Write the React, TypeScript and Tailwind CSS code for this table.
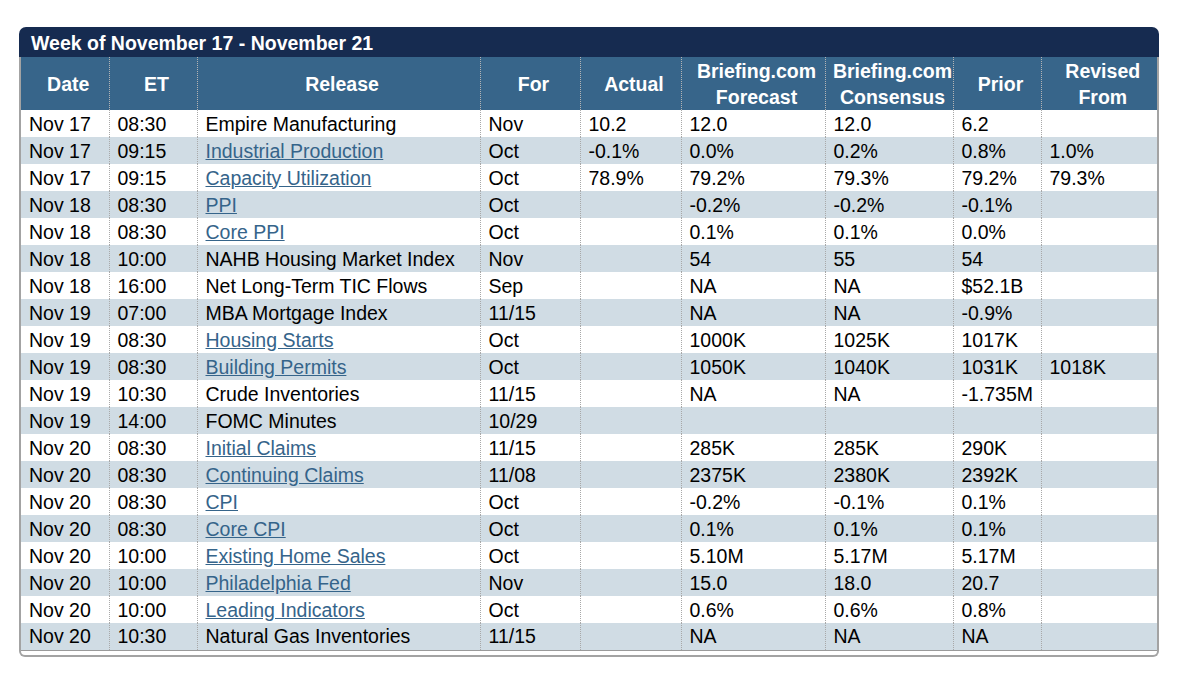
import React from 'react'

type Row = {
  date: string
  et: string
  release: string
  link?: boolean
  forPeriod: string
  actual?: string
  forecast?: string
  consensus?: string
  prior?: string
  revised?: string
}

const rows: Row[] = [
  { date: 'Nov 17', et: '08:30', release: 'Empire Manufacturing', forPeriod: 'Nov', actual: '10.2', forecast: '12.0', consensus: '12.0', prior: '6.2' },
  { date: 'Nov 17', et: '09:15', release: 'Industrial Production', link: true, forPeriod: 'Oct', actual: '-0.1%', forecast: '0.0%', consensus: '0.2%', prior: '0.8%', revised: '1.0%' },
  { date: 'Nov 17', et: '09:15', release: 'Capacity Utilization', link: true, forPeriod: 'Oct', actual: '78.9%', forecast: '79.2%', consensus: '79.3%', prior: '79.2%', revised: '79.3%' },
  { date: 'Nov 18', et: '08:30', release: 'PPI', link: true, forPeriod: 'Oct', forecast: '-0.2%', consensus: '-0.2%', prior: '-0.1%' },
  { date: 'Nov 18', et: '08:30', release: 'Core PPI', link: true, forPeriod: 'Oct', forecast: '0.1%', consensus: '0.1%', prior: '0.0%' },
  { date: 'Nov 18', et: '10:00', release: 'NAHB Housing Market Index', forPeriod: 'Nov', forecast: '54', consensus: '55', prior: '54' },
  { date: 'Nov 18', et: '16:00', release: 'Net Long-Term TIC Flows', forPeriod: 'Sep', forecast: 'NA', consensus: 'NA', prior: '$52.1B' },
  { date: 'Nov 19', et: '07:00', release: 'MBA Mortgage Index', forPeriod: '11/15', forecast: 'NA', consensus: 'NA', prior: '-0.9%' },
  { date: 'Nov 19', et: '08:30', release: 'Housing Starts', link: true, forPeriod: 'Oct', forecast: '1000K', consensus: '1025K', prior: '1017K' },
  { date: 'Nov 19', et: '08:30', release: 'Building Permits', link: true, forPeriod: 'Oct', forecast: '1050K', consensus: '1040K', prior: '1031K', revised: '1018K' },
  { date: 'Nov 19', et: '10:30', release: 'Crude Inventories', forPeriod: '11/15', forecast: 'NA', consensus: 'NA', prior: '-1.735M' },
  { date: 'Nov 19', et: '14:00', release: 'FOMC Minutes', forPeriod: '10/29' },
  { date: 'Nov 20', et: '08:30', release: 'Initial Claims', link: true, forPeriod: '11/15', forecast: '285K', consensus: '285K', prior: '290K' },
  { date: 'Nov 20', et: '08:30', release: 'Continuing Claims', link: true, forPeriod: '11/08', forecast: '2375K', consensus: '2380K', prior: '2392K' },
  { date: 'Nov 20', et: '08:30', release: 'CPI', link: true, forPeriod: 'Oct', forecast: '-0.2%', consensus: '-0.1%', prior: '0.1%' },
  { date: 'Nov 20', et: '08:30', release: 'Core CPI', link: true, forPeriod: 'Oct', forecast: '0.1%', consensus: '0.1%', prior: '0.1%' },
  { date: 'Nov 20', et: '10:00', release: 'Existing Home Sales', link: true, forPeriod: 'Oct', forecast: '5.10M', consensus: '5.17M', prior: '5.17M' },
  { date: 'Nov 20', et: '10:00', release: 'Philadelphia Fed', link: true, forPeriod: 'Nov', forecast: '15.0', consensus: '18.0', prior: '20.7' },
  { date: 'Nov 20', et: '10:00', release: 'Leading Indicators', link: true, forPeriod: 'Oct', forecast: '0.6%', consensus: '0.6%', prior: '0.8%' },
  { date: 'Nov 20', et: '10:30', release: 'Natural Gas Inventories', forPeriod: '11/15', forecast: 'NA', consensus: 'NA', prior: 'NA' },
]

const widths = [88, 88, 283, 100, 101, 144, 128, 88, 116]

export default function App() {
  const cell = 'h-[27px] p-0 pl-[8px] text-left align-middle leading-[22px] whitespace-nowrap border-l border-dotted border-[#a8a8a8]'
  const head = 'h-[53px] p-0 pl-[7px] text-center align-middle font-bold leading-[26px] border-l border-dotted border-[#b4b4b4]'

  return (
    <div className="min-h-screen bg-white pt-[27px] pl-[19px] font-['Liberation_Sans',Arial,sans-serif] text-[19.5px] text-black">
      <div className="w-[1140px]">
        {/* Title bar */}
        <div className="h-[30px] rounded-t-[7px] bg-[#162b50] pl-[12px] font-bold leading-[32px] text-white">
          Week of November 17 - November 21
        </div>

        <div className="rounded-b-[6px] border-x-2 border-b-2 border-[#a3a3a3] pb-[4px]">
          <table className="w-[1136px] table-fixed border-collapse border-b border-[#9a9a9a]">
            <colgroup>
              {widths.map((w, i) => (
                <col key={i} style={{ width: w }} />
              ))}
            </colgroup>
            <thead>
              <tr className="bg-[#37658a] text-white">
                <th className={head + ' border-l-0'}>Date</th>
                <th className={head}>ET</th>
                <th className={head}>Release</th>
                <th className={head}>For</th>
                <th className={head}>Actual</th>
                <th className={head}>Briefing.com<br />Forecast</th>
                <th className={head}>Briefing.com<br />Consensus</th>
                <th className={head}>Prior</th>
                <th className={head}>Revised<br />From</th>
              </tr>
            </thead>
            <tbody>
              {rows.map((r, i) => (
                <tr key={i} className={i % 2 === 1 ? 'bg-[#d0dce4]' : 'bg-white'}>
                  <td className={cell + ' border-l-0'}>{r.date}</td>
                  <td className={cell}>{r.et}</td>
                  <td className={cell}>
                    {r.link ? (
                      <a href="#" className="text-[#35648a] underline">
                        {r.release}
                      </a>
                    ) : (
                      r.release
                    )}
                  </td>
                  <td className={cell}>{r.forPeriod}</td>
                  <td className={cell}>{r.actual}</td>
                  <td className={cell}>{r.forecast}</td>
                  <td className={cell}>{r.consensus}</td>
                  <td className={cell}>{r.prior}</td>
                  <td className={cell}>{r.revised}</td>
                </tr>
              ))}
            </tbody>
          </table>
        </div>
      </div>
    </div>
  )
}
